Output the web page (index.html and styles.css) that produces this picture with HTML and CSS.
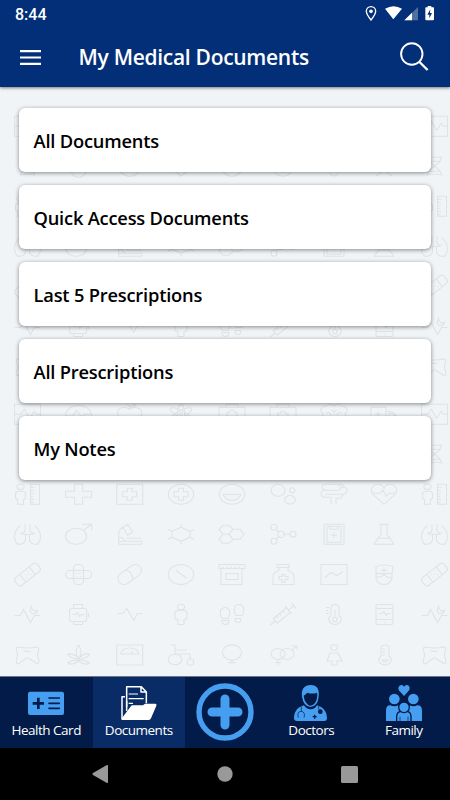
FILE: index.html
```html
<!DOCTYPE html>
<html lang="en">
<head>
    <meta charset="UTF-8">
    <meta name="viewport" content="width=device-width, initial-scale=1.0">
    <title>My Medical Documents</title>
    <link rel="stylesheet" href="styles.css">
</head>
<body>

<header class="header">
    <div class="status-bar">
        <span class="time">8:44</span>
        <svg class="status-icons" width="70" height="16" viewBox="0 0 210 48">
            <path d="M21 2c-8 0-14 6-14 14 0 9 14 26 14 26s14-17 14-26c0-8-6-14-14-14z" fill="none" stroke="#fff" stroke-width="4"/>
            <circle cx="21" cy="16" r="5.5" fill="#fff"/>
            <path d="M63 8q26-15 51 0L88 40z" fill="#fff"/>
            <path d="M121 43L162 3v40z" fill="#50709f"/>
            <path d="M121 43l23-23v23z" fill="#fff"/>
            <path d="M186 4h5V0h11v4h6q2 0 2 3v33q0 3-3 3h-20q-3 0-3-3V7q0-3 2-3z" fill="#fff"/>
            <path d="M199 10l-9 16h6v11l8-16h-6z" fill="#022f78"/>
        </svg>
    </div>
    <div class="toolbar">
        <svg class="menu-icon" width="21" height="15" viewBox="0 0 21 15">
            <path d="M0 1.2h21M0 7.5h21M0 13.8h21" stroke="#fff" stroke-width="2.2"/>
        </svg>
        <h1>My Medical Documents</h1>
        <svg class="search-icon" width="30" height="30" viewBox="0 0 30 30" fill="none" stroke="#fff">
            <circle cx="12.8" cy="12" r="10.7" stroke-width="1.9"/>
            <path d="M20 19.500L28.6 28" stroke-width="2.4"/>
        </svg>
    </div>
</header>

<main class="content">
    <svg class="pattern" width="450" height="589">
        <defs>
            <pattern id="medical" x="2" y="20" width="407" height="288" patternUnits="userSpaceOnUse">
                <g fill="none" stroke="#dfe3e5" stroke-width="1.1">
                    <!-- row 1 -->
                    <path transform="translate(25.5 19.2)" d="M-13-10h26v20h-26zM-13 0h6l4-5 5 9 5-7 2 3h4"/>
                    <path transform="translate(76.6 19.2)" d="M-10 8a13 10.3 0 1 1 20 0zM-12 2h6l4-6 5 7 3-3h6"/>
                    <path transform="translate(127.7 19.2)" d="M0-5c-4-3-12-2-12 4 0 7 6 11 12 9 6 2 12-2 12-9 0-6-8-7-12-4zM0-5q0-4-3-5M0-6q3-5 6-3-2 3-6 3"/>
                    <g transform="translate(179 19.2)">
                        <ellipse rx="12" ry="3.6" transform="rotate(28)"/><ellipse rx="12" ry="3.6" transform="rotate(-28)"/><ellipse rx="3.6" ry="10"/><circle r="1.5"/>
                    </g>
                    <path transform="translate(230 19.2)" d="M-13-7h26V9h-26zM-6-7v-3H6v3M-2-4h4v2h3v4H2v3h-4V2h-3v-4h3z"/>
                    <path transform="translate(281 19.2)" d="M-13-7h26V9h-26zM-6-7v-3H6v3M-2-3h4v2h3v4H2v3h-4V3h-3v-4h3z"/>
                    <path transform="translate(332 19.2)" d="M0-8c-3-3-7-2-8 0-5 0-7 5-3 7-2 4 3 8 6 6 2 3 5 2 5-1 0 3 3 4 5 1 3 2 8-2 6-6 4-2 2-7-3-7-1-2-5-3-8 0zM-8-1q4-2 5 2M8-1q-4-2-5 2M-3-4q3 0 3 3 0-3 3-3"/>
                    <path transform="translate(382 19.2)" d="M-13-7H2V7h-15zM2-3h5l6 5v5H2M-9 0h6M-6-3v6M5-1h4l2 4H5z"/>
                    <!-- row 2 -->
                    <path transform="translate(25.5 59.2)" d="M-7-10c0 10 14 10 14 20M7-10c0 10-14 10-14 20M-7-9H7M-5-5H5M-5 5H5M-7 8H7"/>
                    <path transform="translate(76.6 59.2)" d="M-8-10v8q0 6 8 6t8-6v-8M-7 6a7 5 0 0 0 14 0"/>
                    <ellipse cx="127.7" cy="59.2" rx="11" ry="10"/>
                    <path transform="translate(179 59.2)" d="M-11-8h22v9L0 10-11 1z"/>
                    <ellipse cx="230" cy="59.2" rx="11" ry="10"/>
                    <g transform="translate(281 59.2)"><circle r="10"/><circle r="6"/></g>
                    <path transform="translate(332 59.2)" d="M0-10V2"/><circle cx="332" cy="65" r="4"/>
                    <path transform="translate(382 59.2)" d="M-8 10L0 4 8 10M-4-10L0 4 4-10"/>
                    <!-- row 3 -->
                    <g transform="translate(25.5 99.3)">
                        <ellipse cx="-7" cy="-7.5" rx="3.6" ry="2.8"/>
                        <path d="M-12-1q1-2 3-2h4q2 0 3 2v4q0 2-2 2v5h-6V5q-2 0-2-2zM3-10h9v20H3zM3-7h4M3-4h3M3-1h4M3 2h3M3 5h4M3 8h3"/>
                    </g>
                    <path transform="translate(76.6 99.3)" d="M-4-10h8v7h9v6H4v7h-8V3h-9v-6h9z"/>
                    <path transform="translate(127.7 99.3)" d="M-13-10h26v20h-26zM-2.500-6h5v3.500H7v5H2.500V6h-5V2.500H-7v-5h4.500z"/>
                    <g transform="translate(179 99.3)"><ellipse rx="12.700" ry="10"/><path d="M-2.500-6h5v3.500H7v5H2.500V6h-5V2.500H-7v-5h4.500z"/></g>
                    <g transform="translate(230 99.3)"><ellipse rx="12.700" ry="10"/><path d="M-9 0H9Q6 6 0 6T-9 0z"/></g>
                    <g transform="translate(281 99.3)"><ellipse cx="-5" cy="-4" rx="7" ry="6"/><circle cx="9.300" cy="-4" r="2.600"/><ellipse cx="7" cy="5.500" rx="5.300" ry="4.300"/></g>
                    <path transform="translate(332 99.3)" d="M-9-4q-3-1-3-3.500T-8-10H7q3 0 3 3M-9-4H4q3 0 3-2.500T4-9M-9-4q-4 0-4 3.500T-9 3h6v7M-9 0H9q3 0 4-3t-3-4H7M9 0q-1 4-4 4H2v6"/>
                    <path transform="translate(382 99.3)" d="M0 10L-11 0c-4-5 0-10 5-10 3 0 5 1 6 4 1-3 3-4 6-4 5 0 9 5 5 10zM-12-1h8l3-3 3 6 3-3h7"/>
                    <!-- row 4 -->
                    <path transform="translate(25.5 139.3)" d="M-2.500-10v6q0 3-5 3M2.500-10v6q0 3 5 3M-6 0H6M-2 0v5q0 4-5 5t-6-7q0-6 4-10l2-2M2 0v5q0 4 5 5t6-7q0-6-4-10L7-9"/>
                    <g transform="translate(76.6 139.3)"><ellipse cx="-2.500" cy="2" rx="10.500" ry="8"/><path d="M5-4l8-6M4-10h9v6"/></g>
                    <path transform="translate(127.7 139.3)" d="M-11 10v-12q1-3 4-5M-11 3q5 0 6 4h17v3h-23M-3 4h15M-7-7l5-3 5 8-5 3zM-11 7h6"/>
                    <path transform="translate(179 139.3)" d="M0-7l9 4v6L0 7l-9-4v-6zM0-7v-3M9-3l4-2M9 3l4 2M0 7v3M-9 3l-4 2M-9-3l-4-2"/>
                    <path transform="translate(230 139.3)" d="M-9-9h6l4 4-4 5h-6l-4-5zM-9 0h6l4 5-4 4h-6l-4-4zM1-5h7l4 5-4 5H1M1-5l-4 5 4 5"/>
                    <g transform="translate(281 139.3)"><circle cx="-9" cy="-7" r="3"/><circle cx="-2" cy="0" r="3.300"/><circle cx="-9" cy="7" r="3"/><circle cx="10" cy="0" r="3"/><path d="M-7-5l3 3M-7 5l3-3M1.300 0H7"/></g>
                    <path transform="translate(332 139.3)" d="M-10-10h20v20h-20zM-7-8H7V8H-7zM-4-8v3h8v-3M0-2v6M-3 1h6"/>
                    <path transform="translate(382 139.3)" d="M-5-10H5M-3-10V0l-7 10h20L3 0v-10M-6 4H6"/>
                    <!-- row 5 -->
                    <g transform="translate(25.5 179.5) rotate(-38)"><rect x="-14" y="-5" width="28" height="10" rx="3"/><path d="M-6-5V5M6-5V5M-3-2h1M2-2h1M-3 2h1M2 2h1M0 0h1"/></g>
                    <g transform="translate(76.6 179.5)"><rect x="-13" y="-4" width="26" height="8" rx="4"/><rect x="-5" y="-10" width="10" height="20" rx="4"/><path d="M-5-4H5M-5 4H5M-3-1h1M0-1h1M2-1h1M-2 2h1M2 2h1"/></g>
                    <g transform="translate(127.7 179.5) rotate(-35)"><rect x="-13" y="-6" width="26" height="12" rx="6"/><path d="M0-6Q3 0 0 6"/></g>
                    <g transform="translate(179 179.5)"><ellipse rx="12.700" ry="10"/><path d="M-5-4L6 4"/></g>
                    <path transform="translate(230 179.5)" d="M-13-10h26v4h-26zM-11-6h21v16h-21zM-6-1H6v6H-6zM-9-8v2M-5-8v2M-1-8v2M3-8v2M7-8v2"/>
                    <path transform="translate(281 179.5)" d="M-6-10H6v3H-6zM-4-7v3q-6 2-6 6v8h21V2q0-4-6-6v-3M-1 0h3v2h3v3H2v3h-3V5h-3V2h3z"/>
                    <path transform="translate(332 179.5)" d="M-13-10h26v20h-26zM-9 3l6-5 6 3 6-4"/>
                    <path transform="translate(382 179.5)" d="M-8-8q8-3 17 0l-1 7H-8zM0-7v5M-3-4h6M-8-1v5q2 6 8 6t8-6v-5M-8 3l5-1 3-2 4 3h4"/>
                    <!-- row 6 -->
                    <path transform="translate(25.5 219.5)" d="M-13 1h6l3-6L3 8l4-7h6M4-8q-3 5 1 7 4 1 5-3-5 2-6-4z"/>
                    <g transform="translate(76.6 219.5)"><rect x="-9" y="-6" width="17" height="13" rx="2"/><path d="M-5-6v-4h9v4M-5 7v3h9V7M9-1h1v3H9M-6 0h3l2-2 2 4 2-2h3"/></g>
                    <path transform="translate(127.7 219.5)" d="M-12-1h5l4-5 7 12 4-7h5"/>
                    <g transform="translate(179 219.5)"><ellipse cy="-7.500" rx="3.600" ry="2.700"/><path d="M-6-1q0-3 3-3h6q3 0 3 3v4q0 2-3 2v5h-6V5q-3 0-3-2z"/></g>
                    <g transform="translate(230 219.5)"><path d="M-4 4h-6q-3-5-1-9 2-2 4-2t4 2q2 4-1 9zM4 1h6q3-6 1-9-1-2-4-2t-4 2q-2 4 1 9z"/><path d="M-10 6h7q0 4-3.500 4T-10 6zM3 4h6q0 4-3 4T3 4z"/></g>
                    <g transform="translate(281 219.5) rotate(-39)"><path d="M-17 0h7M-10-3H7v6h-17zM7-5V5M7 0h7M14-4v8M-6-3v3M-2-3v3M2-3v3"/></g>
                    <path transform="translate(332 219.5)" d="M-3 1v-8q0-3 4-3t4 3v8q4 3 1 7-5 4-10 0-3-4 1-7zM1-5v7M-8-7h3M-8-4h2M-8-1h3"/><circle cx="333" cy="224.5" r="2.300"/>
                    <g transform="translate(382 219.5)"><rect x="-8" y="-10" width="17" height="20" rx="1.500"/><path d="M-8-6H9M-8 5H9M-5-1h3l2-2 2 4 2-2h3M0 8h1"/></g>
                    <!-- row 7 -->
                    <path transform="translate(25.5 260)" d="M-9-8Q0-6 9-8q3 0 2 4-2 4 0 8 1 4-1 5L1 3h-2l-8 6q-3 0-2-5 2-4 0-8-1-4 2-4zM-4-4q4 1 7 0"/>
                    <path transform="translate(76.6 260)" d="M0-10q-5 7 0 14 5-7 0-14zM0 4q-4-6-11-5 3 5 11 5 8 0 11-5-7-1-11 5zM0 5q-7 0-11 3 5 3 11-2 6 5 11 2-4-3-11-3z"/>
                    <path transform="translate(127.7 260)" d="M-13-10h26v20h-26zM-9-1q1-6 9-6t9 6zM1-1l2-3"/>
                    <g transform="translate(179 260)"><ellipse cx="-6" cy="4.500" rx="6.800" ry="5.300"/><circle cx="9.500" cy="7" r="3.200"/><path d="M-10-10h4v9H9v5M-6-5H6"/></g>
                    <g transform="translate(230 260)"><ellipse cy="-2.500" rx="9.600" ry="7.600"/><path d="M0 5v5M-4 7.500h8"/></g>
                    <g transform="translate(281 260)"><ellipse cx="-5" cy="-1" rx="7" ry="5.500"/><ellipse cx="4" cy="-1" rx="7" ry="5.500"/><path d="M-5 5v5M-8 7.500h6M9-5l5-4M8-9h6v4"/></g>
                    <g transform="translate(332 260)"><ellipse cy="-7.500" rx="3.500" ry="2.700"/><path d="M-4-2H4l4 8H3v4h-5V6h-5z"/></g>
                    <path transform="translate(382 260)" d="M-3 1v-8q0-3 4-3t4 3v8q4 3 1 7-5 4-10 0-3-4 1-7zM-2-6h3M-2-3h3M-2 0h3M-2 5h6q-3 4-6 0z"/>
                </g>
            </pattern>
        </defs>
        <rect y="20" width="450" height="569" fill="url(#medical)"/>
    </svg>

    <div class="card-list">
        <a class="card">All Documents</a>
        <a class="card">Quick Access Documents</a>
        <a class="card">Last 5 Prescriptions</a>
        <a class="card">All Prescriptions</a>
        <a class="card">My Notes</a>
    </div>
</main>

<nav class="tabs">
    <a class="tab">
        <svg width="40" height="40" viewBox="78 27 120 120">
            <rect x="84" y="50" width="108" height="70" rx="6" fill="#459ef0"/>
            <path d="M98 85h34M115 68v34" stroke="#021b48" stroke-width="8"/>
            <path d="M147 69h31M147 85h31M147 100h31" stroke="#021b48" stroke-width="5" stroke-linecap="round"/>
        </svg>
        <span>Health Card</span>
    </a>
    <a class="tab active">
        <svg width="40" height="40" viewBox="356 27 120 120">
            <g fill="none" stroke="#fff" stroke-width="4.500" stroke-linejoin="round">
                <path d="M379 96V35h44l15 16v34M422 35v16h16"/>
                <path d="M374 65h-9v66q0 2 3 2h6"/>
                <path d="M385 57h28M385 71h45M385 85h13" stroke-width="3.500"/>
                <path d="M379 78v30"/>
            </g>
            <path d="M390 96q2-5 6-5h32l6-5h31q5 0 3 6l-16 38q-2 5-7 5h-78q-5 0-2-6z" fill="#fff"/>
        </svg>
        <span>Documents</span>
    </a>
    <a class="tab add">
        <svg width="58" height="58" viewBox="0 0 58 58" fill="none" stroke="#459ef0">
            <circle cx="29" cy="29" r="26" stroke-width="5.4"/>
            <path d="M29 16v26M16 29h26" stroke-width="9" stroke-linecap="round"/>
        </svg>
    </a>
    <a class="tab">
        <svg width="40" height="40" viewBox="198 27 120 120">
            <path d="M231 65c-3-23 7-35 26-35s27 13 24 35q-2 28-25 31-21-3-25-31z" fill="#459ef0"/>
            <path d="M236 62q7-4 11-9 15 5 29 0l1 9q-2 26-21 30-17-5-20-30z" fill="#021b48"/>
            <path d="M237 91q7 12 20 12t19-12c17 5 29 16 30 38q0 9-8 9h-82q-9 0-9-9c1-22 12-33 30-38z" fill="#459ef0"/>
            <g fill="none" stroke="#021b48" stroke-width="2">
                <path d="M229 94v15M220 128q-5-18 8-19 14 1 9 19M281 92v12"/>
            </g>
            <circle cx="286" cy="110" r="7" fill="#021b48"/>
            <path d="M263 125h12M269 119v12" stroke="#021b48" stroke-width="4"/>
        </svg>
        <span>Doctors</span>
    </a>
    <a class="tab">
        <svg width="40" height="40" viewBox="476 27 120 120">
            <g fill="#459ef0">
                <path d="M536 63l-13-14c-8-9-2-19 6-19q5 0 7 5 3-5 8-5c8 0 13 10 5 19z"/>
                <circle cx="507" cy="72" r="16"/>
                <circle cx="564" cy="72" r="16"/>
                <path d="M482 138v-31q0-16 13-16 12 6 24 0l4 5v42zM590 138v-31q0-16-14-16-12 6-23 0l-4 5v42z"/>
            </g>
            <g fill="#459ef0" stroke="#021b48" stroke-width="4">
                <path d="M514 140v-16q1-14 13-15h18q11 1 12 15v16z"/>
                <circle cx="536" cy="97" r="16"/>
            </g>
            <path d="M524 125v13M548 125v13" stroke="#021b48" stroke-width="2"/>
            <path d="M478 138h116v8H478z" fill="#021b48"/>
        </svg>
        <span>Family</span>
    </a>
</nav>

<footer class="system-bar">
    <svg width="16" height="18" viewBox="0 0 16 18"><path d="M1 8Q0 9 1 10L14.500 17.800Q16 18.500 16 17V1Q16-.5 14.500.2z" fill="#999"/></svg>
    <svg width="16" height="16" viewBox="0 0 16 16"><circle cx="8" cy="8" r="7.700" fill="#999"/></svg>
    <svg width="17" height="17" viewBox="0 0 17 17"><rect width="17" height="17" rx="1.500" fill="#999"/></svg>
</footer>

</body>
</html>
```
FILE: styles.css
```css
* {
    box-sizing: border-box;
}
body {
    margin: 0;
    width: 450px;
    height: 800px;
    display: flex;
    flex-direction: column;
    font-family: "Open Sans", "Noto Sans", sans-serif;
    background-color: #f0f4f6;
    overflow: hidden;
}
svg {
    display: block;
    flex-shrink: 0;
}
.header {
    height: 87px;
    background-color: #022f78;
    color: white;
    box-shadow: 0 1px 3px rgba(0, 0, 0, 0.5);
    z-index: 1;
}
.status-bar {
    height: 27px;
    display: flex;
    justify-content: space-between;
    padding: 6px 16px 0 15px;
}
.time {
    font-family: Roboto, sans-serif;
    font-size: 16px;
    font-weight: 500;
    line-height: 18px;
}
.toolbar {
    height: 60px;
    display: flex;
    align-items: center;
    padding: 0 21px 0 20px;
}
.toolbar h1 {
    flex: 1;
    margin: 0 0 0 37.500px;
    font-size: 21px;
    font-weight: 600;
    line-height: 28px;
    letter-spacing: -0.3px;
    white-space: nowrap;
}
.content {
    height: 589px;
    display: grid;
}
.pattern,
.card-list {
    grid-area: 1 / 1;
}
.card-list {
    display: flex;
    flex-direction: column;
    gap: 13px;
    padding: 21px 19px 0;
}
.card {
    height: 64px;
    display: flex;
    align-items: center;
    padding: 1px 15px 0 14.500px;
    background-color: white;
    border-radius: 6px;
    box-shadow: 0 1px 4px rgba(0, 0, 0, 0.45);
    color: black;
    font-size: 18.300px;
    font-weight: 600;
    letter-spacing: -0.2px;
}
.tabs {
    height: 72px;
    display: grid;
    grid-template-columns: 92.500px 92.500px 1fr 92.500px 92.500px;
    background-color: #021b48;
    border-top: 1px solid #6d7789;
    color: white;
}
.tab {
    display: flex;
    flex-direction: column;
    align-items: center;
    padding-top: 7px;
    font-size: 13.500px;
    line-height: 12px;
    letter-spacing: -0.5px;
    white-space: nowrap;
}
.tab.active {
    background-color: #0a2c66;
}
.tab.add {
    padding-top: 6px;
}
.system-bar {
    height: 52px;
    display: flex;
    align-items: center;
    justify-content: space-between;
    padding: 0 92px;
    background-color: black;
}
```
